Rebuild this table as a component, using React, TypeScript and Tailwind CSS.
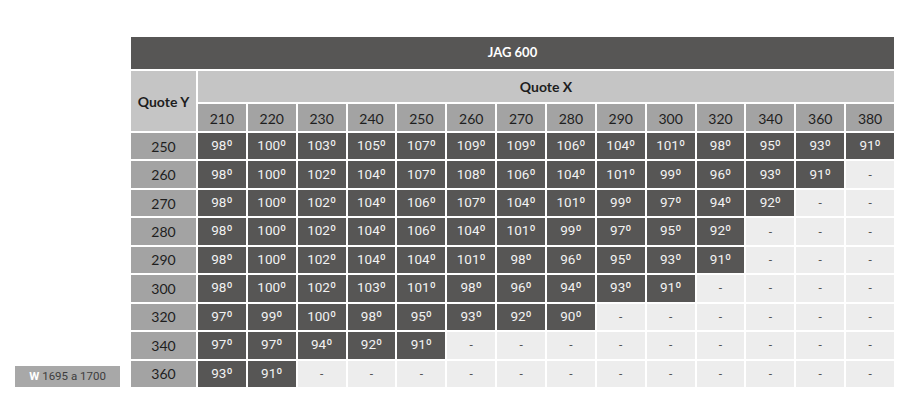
import React from "react";

const cols = [210, 220, 230, 240, 250, 260, 270, 280, 290, 300, 320, 340, 360, 380];
const rows: [number, (number | null)[]][] = [
  [250, [98, 100, 103, 105, 107, 109, 109, 106, 104, 101, 98, 95, 93, 91]],
  [260, [98, 100, 102, 104, 107, 108, 106, 104, 101, 99, 96, 93, 91, null]],
  [270, [98, 100, 102, 104, 106, 107, 104, 101, 99, 97, 94, 92, null, null]],
  [280, [98, 100, 102, 104, 106, 104, 101, 99, 97, 95, 92, null, null, null]],
  [290, [98, 100, 102, 104, 104, 101, 98, 96, 95, 93, 91, null, null, null]],
  [300, [98, 100, 102, 103, 101, 98, 96, 94, 93, 91, null, null, null, null]],
  [320, [97, 99, 100, 98, 95, 93, 92, 90, null, null, null, null, null, null]],
  [340, [97, 97, 94, 92, 91, null, null, null, null, null, null, null, null, null]],
  [360, [93, 91, null, null, null, null, null, null, null, null, null, null, null, null]],
];

const headFont = "font-['Lato','Open_Sans',sans-serif]";

export default function App() {
  return (
    <div className="w-[913px] h-[404px] bg-white flex pt-[37px] font-['Roboto','Liberation_Sans',sans-serif]">
      <div className="w-[131px] h-[350px] flex items-end">
        <div className="ml-[15px] w-[105px] h-[21px] bg-[#a8a8a8] flex items-center justify-center text-[11.5px] text-[#3d3d3d]">
          <span className="font-bold text-white mr-[3px]">W</span>1695 a 1700
        </div>
      </div>
      <div className="w-[763px] h-[350px] grid gap-[2px] grid-cols-[65px_repeat(14,1fr)] grid-rows-[32px_31px_27px_repeat(9,1fr)]">
        <div className="col-span-15 bg-[#575655] text-white font-bold text-[13px] flex items-center justify-center font-['Lato','Open_Sans',sans-serif]">
          JAG 600
        </div>
        <div className="row-span-2 bg-[#c5c5c5] text-[#1e1e1e] font-bold text-[14px] flex items-center justify-center font-['Lato','Open_Sans',sans-serif]">
          Quote Y
        </div>
        <div className="col-span-14 bg-[#c5c5c5] text-[#1e1e1e] font-bold text-[14px] flex items-center justify-center font-['Lato','Open_Sans',sans-serif]">
          Quote X
        </div>
        {cols.map((c) => (
          <div
            key={c}
            className="bg-[#a3a3a3] text-[#1e1e1e] text-[14px] flex items-center justify-center pt-[2px] font-['Lato','Open_Sans',sans-serif]"
          >
            {c}
          </div>
        ))}
        {rows.map(([y, vals]) => (
          <React.Fragment key={y}>
            <div className="bg-[#a3a3a3] text-[#1e1e1e] text-[14px] flex items-center justify-center font-['Lato','Open_Sans',sans-serif]">
              {y}
            </div>
            {vals.map((v, i) =>
              v === null ? (
                <div
                  key={i}
                  className="bg-[#ededed] text-[#555] text-[12px] flex items-center justify-center"
                >
                  -
                </div>
              ) : (
                <div
                  key={i}
                  className="bg-[#575655] text-[#f2f2f2] text-[13.5px] flex items-center justify-center pb-[2px]"
                >
                  {v}º
                </div>
              )
            )}
          </React.Fragment>
        ))}
      </div>
    </div>
  );
}
